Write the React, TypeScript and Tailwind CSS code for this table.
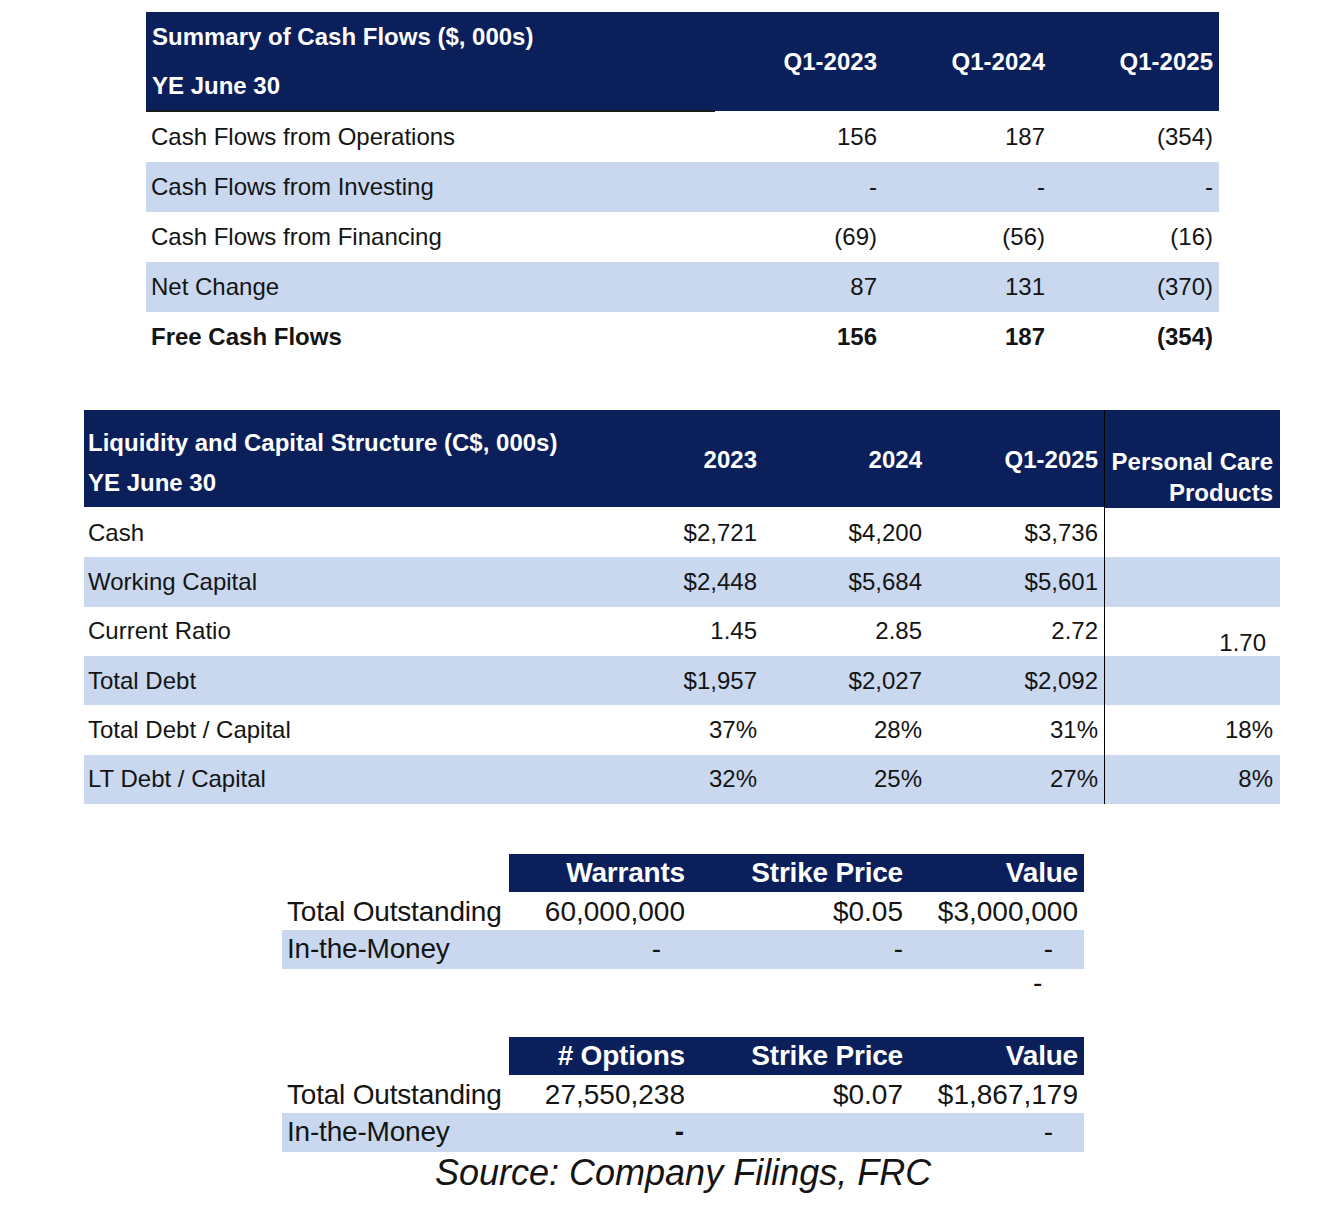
import React from 'react'
import { clsx } from 'clsx'

const cashFlows = [
  ['Cash Flows from Operations', '156', '187', '(354)'],
  ['Cash Flows from Investing', '-', '-', '-'],
  ['Cash Flows from Financing', '(69)', '(56)', '(16)'],
  ['Net Change', '87', '131', '(370)'],
]

const liquidity = [
  ['Cash', '$2,721', '$4,200', '$3,736', ''],
  ['Working Capital', '$2,448', '$5,684', '$5,601', ''],
  ['Current Ratio', '1.45', '2.85', '2.72', '1.70'],
  ['Total Debt', '$1,957', '$2,027', '$2,092', ''],
  ['Total Debt / Capital', '37%', '28%', '31%', '18%'],
  ['LT Debt / Capital', '32%', '25%', '27%', '8%'],
]

function CashFlowTable() {
  return (
    <div className="ml-[146px] mt-[12px] grid w-[1073px] grid-cols-[569px_168px_168px_168px] text-[24px] text-[#141414]">
      <div className="flex h-[100px] flex-col border-b-2 border-[#1a1a1a] bg-[#0b1f5b] pl-[6px] font-bold text-white">
        <div className="flex h-[49px] items-center">Summary of Cash Flows ($, 000s)</div>
        <div className="flex h-[49px] items-center">YE June 30</div>
      </div>
      {['Q1-2023', 'Q1-2024', 'Q1-2025'].map((h) => (
        <div key={h} className="flex h-[99px] items-center justify-end bg-[#0b1f5b] pr-[6px] font-bold text-white">
          {h}
        </div>
      ))}
      {cashFlows.map((row, i) => (
        <React.Fragment key={row[0]}>
          {row.map((cell, j) => (
            <div
              key={j}
              className={clsx(
                'flex h-[50px] items-center',
                i % 2 === 1 && 'bg-[#c9d8ef]',
                j === 0 ? 'pl-[5px]' : 'justify-end pr-[6px]'
              )}
            >
              {cell}
            </div>
          ))}
        </React.Fragment>
      ))}
      {['Free Cash Flows', '156', '187', '(354)'].map((cell, j) => (
        <div
          key={j}
          className={clsx('flex h-[50px] items-center font-bold', j === 0 ? 'pl-[5px]' : 'justify-end pr-[6px]')}
        >
          {cell}
        </div>
      ))}
    </div>
  )
}

function LiquidityTable() {
  return (
    <div className="ml-[84px] mt-[48px] grid w-[1196px] grid-cols-[514px_165px_165px_176px_176px] text-[24px] text-[#141414]">
      <div className="flex h-[97px] flex-col bg-[#0b1f5b] pl-[4px] pt-[13px] font-bold text-white">
        <div className="flex h-[40px] items-center">Liquidity and Capital Structure (C$, 000s)</div>
        <div className="flex h-[40px] items-center">YE June 30</div>
      </div>
      {['2023', '2024', 'Q1-2025'].map((h) => (
        <div key={h} className="flex h-[97px] items-center justify-end bg-[#0b1f5b] pr-[6px] pt-[2px] font-bold text-white">
          {h}
        </div>
      ))}
      <div className="flex h-[98px] flex-col items-end justify-end border-l border-black bg-[#0b1f5b] pr-[7px] font-bold leading-[31px] text-white">
        <div>Personal Care</div>
        <div>Products</div>
      </div>
      {liquidity.map((row, i) => (
        <React.Fragment key={row[0]}>
          {row.map((cell, j) => (
            <div
              key={j}
              className={clsx(
                'flex h-[49.33px] items-center',
                i % 2 === 1 && 'bg-[#c9d8ef]',
                j === 0 && 'pl-[4px]',
                j > 0 && j < 4 && 'justify-end pr-[6px]',
                j === 4 && 'justify-end border-l border-black',
                j === 4 && (i === 2 ? 'pr-[14px] pt-[24px]' : 'pr-[7px]')
              )}
            >
              {cell}
            </div>
          ))}
        </React.Fragment>
      ))}
    </div>
  )
}

interface EquityTableProps {
  first: string
  total: string[]
  itm: React.ReactNode[]
  className?: string
}

function EquityTable({ first, total, itm, className }: EquityTableProps) {
  return (
    <div className={clsx('ml-[282px] grid w-[802px] grid-cols-[227px_182px_218px_175px] text-[28px] text-[#141414]', className)}>
      <div className="h-[38px]" />
      {[first, 'Strike Price', 'Value'].map((h) => (
        <div key={h} className="flex h-[38px] items-center justify-end bg-[#0b1f5b] pr-[6px] font-bold tracking-[-0.2px] text-white">
          {h}
        </div>
      ))}
      <div className="flex h-[38px] items-center pl-[5px] pt-[2px] tracking-[-0.2px]">Total Outstanding</div>
      {total.map((v, j) => (
        <div key={j} className="flex h-[38px] items-center justify-end pr-[6px] pt-[2px]">
          {v}
        </div>
      ))}
      <div className="flex h-[39px] items-center bg-[#c9d8ef] pl-[5px] tracking-[-0.2px]">In-the-Money</div>
      {itm.map((v, j) => (
        <div key={j} className="flex h-[39px] items-center justify-end bg-[#c9d8ef]">
          {v}
        </div>
      ))}
    </div>
  )
}

export default function App() {
  return (
    <div className="h-[1208px] w-[1326px] bg-white font-['Liberation_Sans',Arial,sans-serif]">
      <CashFlowTable />
      <LiquidityTable />
      <EquityTable
        className="mt-[50px]"
        first="Warrants"
        total={['60,000,000', '$0.05', '$3,000,000']}
        itm={[
          <span key="a" className="pr-[30px]">-</span>,
          <span key="b" className="pr-[6px]">-</span>,
          <span key="c" className="pr-[31px]">-</span>,
        ]}
      />
      <div className="ml-[1033px] h-[68px] text-[28px] leading-[28px] text-[#141414]">-</div>
      <EquityTable
        first="# Options"
        total={['27,550,238', '$0.07', '$1,867,179']}
        itm={[
          <span key="a" className="pr-[7px] font-bold">-</span>,
          <span key="b" />,
          <span key="c" className="pr-[31px]">-</span>,
        ]}
      />
      <div className="pl-[435px] text-[36px] italic leading-[42px] text-[#141414]">
        Source: Company Filings, FRC
      </div>
    </div>
  )
}
